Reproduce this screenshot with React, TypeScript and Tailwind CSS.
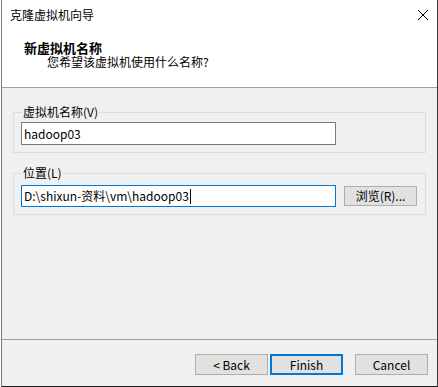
export default function App() {
  return (
    <div className="w-[438px] h-[387px] bg-white pl-px font-['Noto_Sans_CJK_SC',sans-serif] text-[12px] text-black leading-none">
      <div className="w-[437px] h-[387px] border-l border-l-[#808080] border-r border-r-[#404040] border-b border-b-[#1a1a1a] flex flex-col">
        {/* title bar */}
        <div className="h-[30px] flex items-center justify-between pl-[8px] pr-[8px] bg-white shrink-0">
          <span>克隆虚拟机向导</span>
          <svg width="10" height="10" viewBox="0 0 10 10" className="mr-[1px]">
            <path d="M0 0L10 10M10 0L0 10" stroke="#000" strokeWidth="1" />
          </svg>
        </div>

        {/* header */}
        <div className="h-[58px] bg-white border-b border-b-[#a0a0a0] shrink-0 pl-[22px] pt-[11px]">
          <div className="font-bold text-[13px] leading-[14px]">新虚拟机名称</div>
          <div className="pl-[23px] leading-[13px]">您希望该虚拟机使用什么名称?</div>
        </div>

        {/* body */}
        <div className="flex-1 bg-[#f0f0f0] pt-[16px] px-[11px]">
          <fieldset className="w-[413px] border border-[#dcdcdc] pl-[7px] pr-[7px] pb-[7px]">
            <legend className="ml-px px-px leading-[16px]">虚拟机名称(V)</legend>
            <div className="w-[315px] h-[23px] bg-white border border-[#7a7a7a] mt-[2px] flex items-center pl-[2px]">
              hadoop03
            </div>
          </fieldset>

          <fieldset className="w-[413px] border border-[#dcdcdc] pl-[7px] pr-[7px] pb-[7px] mt-[12px]">
            <legend className="ml-px px-px leading-[16px]">位置(L)</legend>
            <div className="flex items-center gap-[8px] mt-[4px]">
              <div className="w-[315px] h-[22px] bg-white border border-[#0078d7] flex items-center pl-[2px]">
                <span>D:\shixun-资料\vm\hadoop03</span>
                <span className="w-px h-[15px] bg-black ml-px"></span>
              </div>
              <button className="w-[73px] h-[20px] bg-[#e1e1e1] border border-[#adadad] flex items-center justify-center">
                浏览(R)...
              </button>
            </div>
          </fieldset>
        </div>

        {/* footer */}
        <div className="h-[47px] bg-[#f0f0f0] border-t border-t-[#a0a0a0] shrink-0 flex justify-end items-start pt-[14px] pr-[9px]">
          <button className="w-[73px] h-[21px] bg-[#e1e1e1] border border-[#adadad] flex items-center justify-center">
            &lt; Back
          </button>
          <button className="w-[73px] h-[21px] ml-[2px] bg-[#e1e1e1] border-2 border-[#0078d7] flex items-center justify-center">
            Finish
          </button>
          <button className="w-[73px] h-[21px] ml-[12px] bg-[#e1e1e1] border border-[#adadad] flex items-center justify-center">
            Cancel
          </button>
        </div>
      </div>
    </div>
  );
}
